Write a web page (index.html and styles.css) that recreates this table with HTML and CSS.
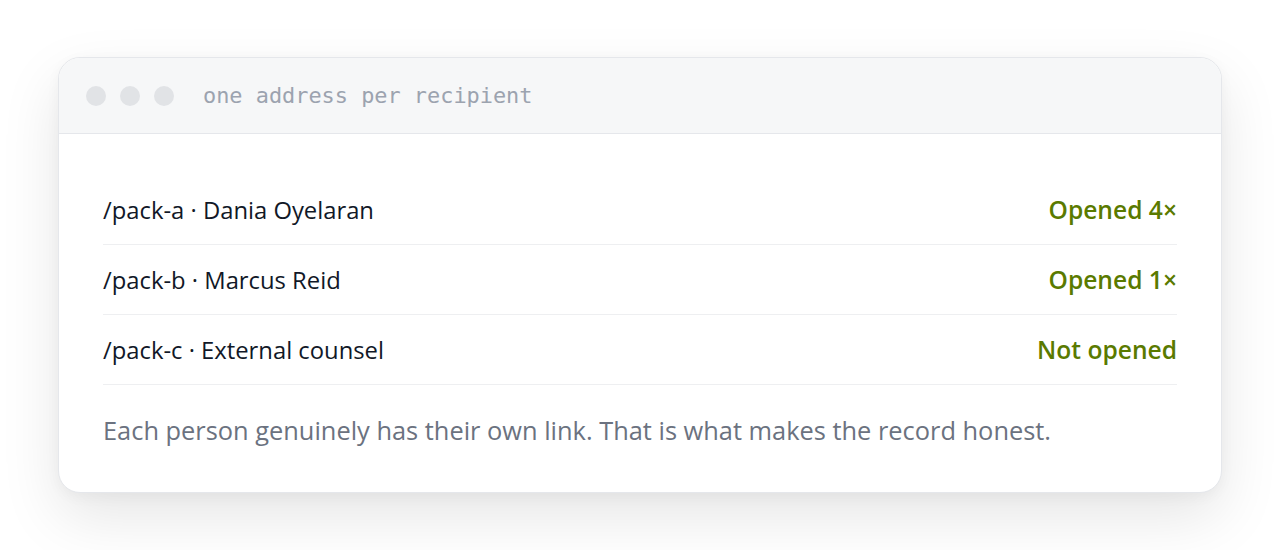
FILE: index.html
```html
<!DOCTYPE html>
<html>
<head>
<meta charset="utf-8">
<link rel="stylesheet" href="styles.css">
</head>
<body>
<div class="stage">
  <div class="card">
    <div class="titlebar">
      <span class="dot"></span><span class="dot"></span><span class="dot"></span>
      <span class="title">one address per recipient</span>
    </div>
    <div class="content">
      <div class="row"><span class="name">/pack-a · Dania Oyelaran</span><span class="status">Opened 4×</span></div>
      <div class="row"><span class="name">/pack-b · Marcus Reid</span><span class="status">Opened 1×</span></div>
      <div class="row"><span class="name">/pack-c · External counsel</span><span class="status">Not opened</span></div>
      <p class="note">Each person genuinely has their own link. That is what makes the record honest.</p>
    </div>
  </div>
</div>
</body>
</html>
```
FILE: styles.css
```css
html, body {
  margin: 0;
  padding: 0;
  background: #ffffff;
}
body {
  font-family: "Open Sans", "Noto Sans", sans-serif;
  color: #111827;
  min-height: 550px;
}
.stage {
  padding: 57px 58px 0 58px;
}
.card {
  background: #ffffff;
  border: 1px solid #e5e7eb;
  border-radius: 22px;
  overflow: hidden;
  box-shadow: 0 24px 60px rgba(0, 0, 0, 0.10), 0 4px 14px rgba(0, 0, 0, 0.04);
}
.titlebar {
  height: 75px;
  background: #f6f7f8;
  border-bottom: 1px solid #e5e7eb;
  display: flex;
  align-items: center;
  padding-left: 27px;
}
.dot {
  width: 20px;
  height: 20px;
  border-radius: 50%;
  background: #e1e3e6;
  margin-right: 14px;
}
.title {
  margin-left: 15px;
  font-family: "DejaVu Sans Mono", "Liberation Mono", monospace;
  font-size: 21.9px;
  color: #9ca3af;
}
.content {
  padding: 41px 44px 45px 44px;
}
.row {
  height: 69px;
  border-bottom: 1px solid #eeeff1;
  display: flex;
  align-items: center;
  justify-content: space-between;
  font-size: 23.8px;
}
.status {
  color: #5a7a00;
  font-weight: 600;
  font-size: 24.6px;
}
.note {
  margin: 28px 0 0 0;
  font-size: 25.4px;
  line-height: 34px;
  color: #6b7280;
}
```
